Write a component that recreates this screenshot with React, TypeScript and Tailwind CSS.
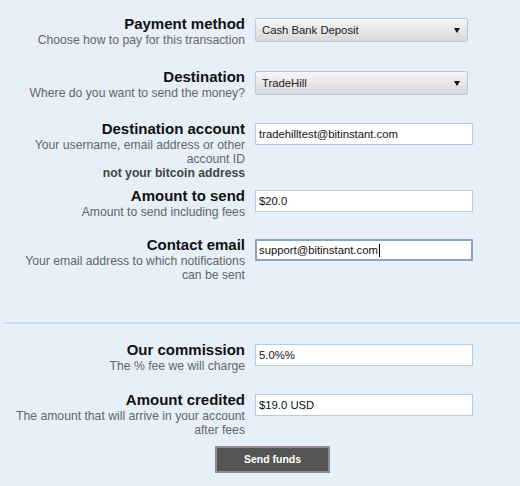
import React from 'react';

type Row = {
  title: string;
  desc: React.ReactNode;
  field: React.ReactNode;
  gap: string;
};

const font = { fontFamily: '"Liberation Sans", Arial, sans-serif' };

function SelectBox({ value }: { value: string }) {
  return (
    <div className="mt-[3px] flex h-[24px] w-[213px] items-center justify-between rounded-[2px] border border-[#b4cbe1] bg-gradient-to-b from-[#f6f6f6] to-[#d9d9d9] pl-[6px] pr-[7px] text-[11.3px] text-[#222]">
      <span>{value}</span>
      <svg width="6" height="5" viewBox="0 0 6 5">
        <path d="M0 0H6L3 5Z" fill="#111" />
      </svg>
    </div>
  );
}

function TextBox({ value, focused }: { value: string; focused?: boolean }) {
  return (
    <div
      className={
        focused
          ? 'mt-[3px] flex h-[22px] w-[218px] items-center rounded-[1px] border-2 border-[#8ba3c2] bg-white pl-[2px] text-[11.3px] text-[#111]'
          : 'mt-[3px] flex h-[22px] w-[218px] items-center border border-[#b2cce4] bg-white pl-[3px] text-[11.3px] text-[#111]'
      }
    >
      <span>{value}</span>
      {focused && <span className="ml-[1px] inline-block h-[13px] w-px bg-black" />}
    </div>
  );
}

function FormRow({ row }: { row: Row }) {
  return (
    <div className={`flex ${row.gap}`}>
      <div className="w-[245px] shrink-0 text-right">
        <div className="text-[15px] font-bold leading-[18px] text-[#111]">{row.title}</div>
        <div className="text-[12.2px] leading-[14px] text-[#666]">{row.desc}</div>
      </div>
      <div className="ml-[10px]">{row.field}</div>
    </div>
  );
}

export default function App() {
  const top: Row[] = [
    {
      title: 'Payment method',
      desc: 'Choose how to pay for this transaction',
      field: <SelectBox value="Cash Bank Deposit" />,
      gap: 'mb-[21px]',
    },
    {
      title: 'Destination',
      desc: 'Where do you want to send the money?',
      field: <SelectBox value="TradeHill" />,
      gap: 'mb-[20px]',
    },
    {
      title: 'Destination account',
      desc: (
        <>
          Your username, email address or other
          <br />
          account ID
          <br />
          <span className="font-bold text-[#444]">not your bitcoin address</span>
        </>
      ),
      field: <TextBox value="tradehilltest@bitinstant.com" />,
      gap: 'mb-[7px]',
    },
    {
      title: 'Amount to send',
      desc: 'Amount to send including fees',
      field: <TextBox value="$20.0" />,
      gap: 'mb-[17px]',
    },
    {
      title: 'Contact email',
      desc: (
        <>
          Your email address to which notifications
          <br />
          can be sent
        </>
      ),
      field: <TextBox value="support@bitinstant.com" focused />,
      gap: 'mb-[40px]',
    },
  ];

  const bottom: Row[] = [
    {
      title: 'Our commission',
      desc: 'The % fee we will charge',
      field: <TextBox value="5.0%%" />,
      gap: 'mb-[18px]',
    },
    {
      title: 'Amount credited',
      desc: (
        <>
          The amount that will arrive in your account
          <br />
          after fees
        </>
      ),
      field: <TextBox value="$19.0 USD" />,
      gap: 'mb-[9px]',
    },
  ];

  return (
    <div className="h-[486px] w-[520px] overflow-hidden bg-[#e7eff9] pt-[15px]" style={font}>
      {top.map((r) => (
        <FormRow key={r.title} row={r} />
      ))}

      <div className="ml-[4px] border-t-2 border-[#c9ddf0]" />

      <div className="pt-[17px]">
        {bottom.map((r) => (
          <FormRow key={r.title} row={r} />
        ))}
      </div>

      <div className="ml-[215px] flex h-[27px] w-[115px] items-center justify-center border-2 border-[#8e8e8e] bg-[#555] text-[10.5px] font-bold text-white">
        Send funds
      </div>
    </div>
  );
}
